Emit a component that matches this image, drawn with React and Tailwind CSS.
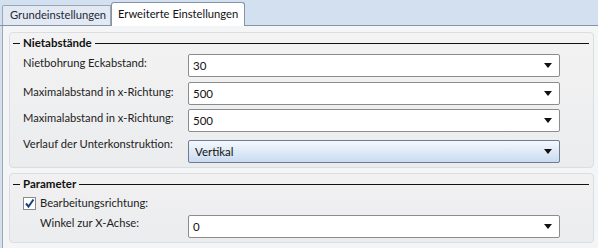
const font = { fontFamily: 'Lato, "Liberation Sans", sans-serif' }

function Arrow() {
    return (
        <svg width="8" height="5" viewBox="0 0 8 5" className="shrink-0">
            <path d="M0 0 H8 L4 5 Z" fill="#111" />
        </svg>
    )
}

function Combo({ value, highlight }) {
    return (
        <div className={`shrink-0 w-[372px] h-[23px] flex items-center justify-between pl-[4px] pr-[7px] rounded-[2px] border text-[11.5px] text-[#111]
            ${highlight ? "border-[#6d7c8e] bg-gradient-to-b from-[#f5f8fc] to-[#c9dbf1]" : "border-[#8c8c8c] bg-white"}`}>
            <span className={highlight ? "pl-[2px]" : ""}>{value}</span>
            <Arrow />
        </div>
    )
}

function GroupHeader({ title }) {
    return (
        <div className="flex items-center h-[16px] pl-[3px] pr-[4px]">
            <div className="w-[7px] h-px bg-[#111]" />
            <span className="px-[3px] text-[11.5px] font-bold text-[#111] leading-none whitespace-nowrap">{title}</span>
            <div className="flex-1 h-px bg-[#111]" />
        </div>
    )
}

function Row({ label, value, labelTop, highlight, className }) {
    return (
        <div className={`flex items-start ${className}`}>
            <div className="w-[178px] shrink-0 pl-[13px] text-[11.2px] text-[#222] leading-[14px] whitespace-nowrap" style={{ marginTop: labelTop }}>{label}</div>
            <Combo value={value} highlight={highlight} />
        </div>
    )
}

export default function App() {
    return (
        <div style={font} className="w-[598px] h-[248px] bg-[#d3e0f0] overflow-hidden flex flex-col">
            <div className="h-[26px] shrink-0 flex items-end pl-[2px] border-b border-[#8593a5]">
                <div className="h-[20px] w-[109px] flex items-center pl-[7px] bg-[#e2e9f3] border border-b-0 border-[#9aa7b7] rounded-tl-[2px] text-[11.2px] text-[#1e2a3a] whitespace-nowrap">
                    Grundeinstellungen
                </div>
                <div className="relative -mb-px h-[24px] w-[134px] flex items-center pl-[6px] bg-white border border-b-0 border-[#8593a5] rounded-t-[3px] text-[11.2px] text-[#111] whitespace-nowrap">
                    Erweiterte Einstellungen
                </div>
            </div>
            <div className="flex-1 ml-[2px] border-l border-[#a3a8ae] bg-[#f4f5f6] pl-[6px] pt-[6px] pr-[4px] flex flex-col gap-[5px]">
                <div className="h-[136px] shrink-0 rounded-[4px] border border-[#dcdddf] bg-gradient-to-b from-[#f3f3f3] to-[#ebecee] pt-[2px]">
                    <GroupHeader title="Nietabstände" />
                    <Row className="mt-[3px]" label="Nietbohrung Eckabstand:" value="30" labelTop={2} />
                    <Row className="mt-[5px]" label="Maximalabstand in x-Richtung:" value="500" labelTop={3} />
                    <Row className="mt-[4px]" label="Maximalabstand in x-Richtung:" value="500" labelTop={2} />
                    <Row className="mt-[8px]" label="Verlauf der Unterkonstruktion:" value="Vertikal" labelTop={-3} highlight />
                </div>
                <div className="h-[70px] shrink-0 rounded-[4px] border border-[#dcdddf] bg-gradient-to-b from-[#f1f1f2] to-[#ebecee] pt-[2px]">
                    <GroupHeader title="Parameter" />
                    <div className="flex items-center h-[14px] mt-[4px] pl-[13px]">
                        <div className="w-[13px] h-[13px] border border-[#8a8a8a] bg-white flex items-center justify-center">
                            <svg width="11" height="11" viewBox="0 0 11 11">
                                <path d="M2 5.5 L4.5 8.5 L9.5 1.5" fill="none" stroke="#1c3f86" strokeWidth="2" />
                            </svg>
                        </div>
                        <span className="pl-[4px] text-[11.2px] leading-[14px] text-[#222]">Bearbeitungsrichtung:</span>
                    </div>
                    <div className="flex items-start mt-[5px]">
                        <div className="w-[178px] shrink-0 pl-[30px] mt-[1px] text-[11.2px] text-[#222] leading-[14px] whitespace-nowrap">Winkel zur X-Achse:</div>
                        <Combo value="0" />
                    </div>
                </div>
            </div>
        </div>
    )
}
